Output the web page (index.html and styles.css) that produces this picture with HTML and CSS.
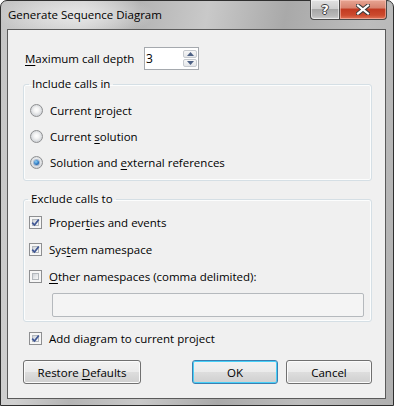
FILE: index.html
```html
<!DOCTYPE html>
<html>
<head>
<meta charset="utf-8">
<link rel="stylesheet" href="styles.css">
</head>
<body>
<div class="window">
  <div class="titlebar">
    <div class="title">Generate Sequence Diagram</div>
    <div class="capbtns">
      <div class="cap help"><span class="cap-glyph">?</span></div>
      <div class="cap close">
        <svg width="14" height="11" viewBox="0 0 14 11">
          <path d="M2 1.5 L12 9.5 M12 1.5 L2 9.5" stroke="#3a3a3a" stroke-width="4.2" stroke-linecap="square" fill="none"/>
          <path d="M2 1.5 L12 9.5 M12 1.5 L2 9.5" stroke="#ffffff" stroke-width="2.2" stroke-linecap="square" fill="none"/>
        </svg>
      </div>
    </div>
  </div>
  <div class="client">
    <div class="depth-row">
      <span class="depth-label"><u>M</u>aximum call depth</span>
      <div class="spin">
        <span class="spin-val">3</span>
        <div class="spin-btns">
          <div class="sb"><svg width="7" height="4" viewBox="0 0 7 4"><path d="M0 4 L3.5 0 L7 4 Z" fill="#4d6185"/></svg></div>
          <div class="sb"><svg width="7" height="4" viewBox="0 0 7 4"><path d="M0 0 L3.5 4 L7 0 Z" fill="#4d6185"/></svg></div>
        </div>
      </div>
    </div>

    <fieldset class="group group-include">
      <legend>Include calls in</legend>
      <div class="opt"><span class="radio"></span><span>Current <u>p</u>roject</span></div>
      <div class="opt"><span class="radio"></span><span>Current <u>s</u>olution</span></div>
      <div class="opt"><span class="radio radio-on"><span class="dot"></span></span><span>Solution and <u>e</u>xternal references</span></div>
    </fieldset>

    <fieldset class="group group-exclude">
      <legend>Exclude calls to</legend>
      <div class="opt opt-check">
        <span class="check"><svg class="tick" width="9" height="9" viewBox="0 0 9 9"><path d="M1.2 4.6 L3.5 7 L7.8 1.4" stroke="#3f5694" stroke-width="1.7" fill="none"/></svg></span>
        <span>Proper<u>t</u>ies and events</span>
      </div>
      <div class="opt opt-check">
        <span class="check"><svg class="tick" width="9" height="9" viewBox="0 0 9 9"><path d="M1.2 4.6 L3.5 7 L7.8 1.4" stroke="#3f5694" stroke-width="1.7" fill="none"/></svg></span>
        <span>Sys<u>t</u>em namespace</span>
      </div>
      <div class="opt opt-check">
        <span class="check"></span>
        <span><u>O</u>ther namespaces (comma delimited):</span>
      </div>
      <div class="ns-input"></div>
    </fieldset>

    <div class="opt opt-check add-row">
      <span class="check"><svg class="tick" width="9" height="9" viewBox="0 0 9 9"><path d="M1.2 4.6 L3.5 7 L7.8 1.4" stroke="#3f5694" stroke-width="1.7" fill="none"/></svg></span>
      <span>Add diagram to current project</span>
    </div>

    <div class="button-row">
      <div class="btn btn-restore"><span>Restore <u>D</u>efaults</span></div>
      <div class="btn-pair">
        <div class="btn btn-default"><span>OK</span></div>
        <div class="btn"><span>Cancel</span></div>
      </div>
    </div>
  </div>
</div>
</body>
</html>
```

FILE: styles.css
```css
html, body {
  margin: 0;
  padding: 0;
  background: #ffffff;
}

body {
  font-family: "Open Sans", "Noto Sans", "DejaVu Sans", sans-serif;
  font-size: 11.5px;
  color: #000000;
}

u {
  text-decoration: underline;
  text-underline-offset: 2px;
  text-decoration-thickness: 1px;
}

.window {
  width: 394px;
  height: 406px;
  box-sizing: border-box;
  border: 1px solid #2f2f2f;
  border-radius: 7px 7px 0 0;
  padding: 0 7px 6px 6px;
  display: flex;
  flex-direction: column;
  background:
    radial-gradient(ellipse 80px 22px at 75px 14px, rgba(235,235,235,0.85), rgba(235,235,235,0) 100%),
    linear-gradient(100deg, #c4c4c4 0%, #d0d0d0 18%, #b4b4b4 30%, #c9c9c9 45%, #a9a9a9 62%, #bdbdbd 80%, #b0b0b0 100%);
}

.titlebar {
  height: 28px;
  flex: none;
  display: flex;
  justify-content: space-between;
  align-items: flex-start;
}

.title {
  padding-left: 1px;
  line-height: 28px;
  font-size: 11.5px;
  color: #000;
}

.capbtns {
  display: flex;
  margin-top: -1px;
  margin-right: -1px;
}

.cap {
  height: 20px;
  box-sizing: border-box;
  border: 1px solid #4a4a4a;
  border-top: none;
  display: flex;
  align-items: center;
  justify-content: center;
}

.help {
  width: 29px;
  border-radius: 0 0 0 4px;
  border-right: none;
  background: linear-gradient(#e2e2e2 0%, #cfcfcf 45%, #a7a7a7 50%, #b9b9b9 85%, #d3d3d3 100%);
  box-shadow: inset 0 0 0 1px rgba(255,255,255,0.55);
}

.cap-glyph {
  font-family: "DejaVu Sans", sans-serif;
  font-weight: bold;
  font-size: 13px;
  line-height: 1;
  color: #ffffff;
  text-shadow: 1px 0 0 #3c3c3c, -1px 0 0 #3c3c3c, 0 1px 0 #3c3c3c, 0 -1px 0 #3c3c3c;
}

.close {
  width: 48px;
  border-radius: 0 0 4px 0;
  background: linear-gradient(#e7a593 0%, #d88470 40%, #c23b22 50%, #cc4a2e 80%, #e0765a 100%);
  box-shadow: inset 0 0 0 1px rgba(255,210,200,0.5);
}

.client {
  flex: 1;
  border: 1px solid #5a5a5a;
  background: #f0f0f0;
  padding: 17px 13px 0 15px;
  display: flex;
  flex-direction: column;
}

.depth-row {
  display: flex;
  align-items: center;
  height: 23px;
}

.depth-label {
  width: 119px;
  padding-left: 2px;
}

.spin {
  width: 55px;
  height: 23px;
  box-sizing: border-box;
  border: 1px solid #a5a9ae;
  background: #ffffff;
  display: flex;
  justify-content: space-between;
  align-items: stretch;
  padding: 1px 1px 1px 1px;
}

.spin-val {
  line-height: 19px;
  font-size: 12px;
}

.spin-btns {
  display: flex;
  flex-direction: column;
  gap: 1px;
  width: 14px;
  padding-top: 1px;
}

.sb {
  height: 8px;
  box-sizing: border-box;
  border: 1px solid #c6cacf;
  border-radius: 2px;
  background: linear-gradient(#f7f7f7, #e4e6e9);
  display: flex;
  align-items: center;
  justify-content: center;
}

.group {
  margin: 0;
  min-width: 0;
  border: 1px solid #d5dfe5;
  border-radius: 3px;
  box-shadow: inset 0 0 0 1px #fcfdfd;
}

.group legend {
  padding: 0 3px;
  margin-left: -1px;
  line-height: 16px;
}

.group-include {
  margin-top: 6px;
  padding: 5px 0 5px 6px;
}

.group-exclude {
  margin-top: 10px;
  padding: 2px 0 4px 5px;
}

.opt {
  display: flex;
  align-items: center;
  height: 26px;
  gap: 7px;
}

.group-exclude .opt {
  height: 27px;
}

.radio {
  width: 13px;
  height: 13px;
  box-sizing: border-box;
  border-radius: 50%;
  border: 1px solid #8e8f91;
  background: radial-gradient(circle at 50% 45%, #ffffff 0%, #f4f4f4 30%, #d3d6da 70%, #e8e9eb 100%);
  display: flex;
  align-items: center;
  justify-content: center;
  flex: none;
}

.dot {
  width: 5px;
  height: 5px;
  border-radius: 50%;
  background: radial-gradient(circle at 40% 35%, #8fd0f4 0%, #2f7bc4 55%, #0d3a78 100%);
  box-shadow: 0 0 0 1px rgba(30,80,150,0.35);
}

.check {
  width: 13px;
  height: 13px;
  box-sizing: border-box;
  border: 1px solid #8e8f91;
  background: #f6f6f6;
  padding: 1px;
  display: flex;
  align-items: center;
  justify-content: center;
  flex: none;
  position: relative;
}

.check::before {
  content: "";
  position: absolute;
  inset: 2px;
  border: 1px solid #b3b8bd;
  background: linear-gradient(135deg, #cfd3d8 0%, #e9ebed 60%, #f8f8f8 100%);
}

.tick {
  position: relative;
}

.ns-input {
  margin-top: 3px;
  margin-left: 23px;
  width: 312px;
  height: 24px;
  box-sizing: border-box;
  border: 1px solid #b5b9bd;
  border-radius: 2px;
  background: #f4f4f4;
}

.add-row {
  margin-top: 3px;
  padding-left: 6px;
}

.button-row {
  margin-top: 9px;
  display: flex;
  justify-content: space-between;
}

.btn-pair {
  display: flex;
  gap: 8px;
}

.btn {
  width: 86px;
  height: 24px;
  box-sizing: border-box;
  border: 1px solid #707070;
  border-radius: 3px;
  background: linear-gradient(#f2f2f2 0%, #ebebeb 48%, #dddddd 52%, #cfcfcf 100%);
  box-shadow: inset 0 0 0 1px #fbfbfb;
  display: flex;
  align-items: center;
  justify-content: center;
}

.btn-restore {
  width: 118px;
}

.btn-default {
  border-color: #3c7fb1;
  box-shadow: inset 0 0 0 1px #48d0f8;
}
```
